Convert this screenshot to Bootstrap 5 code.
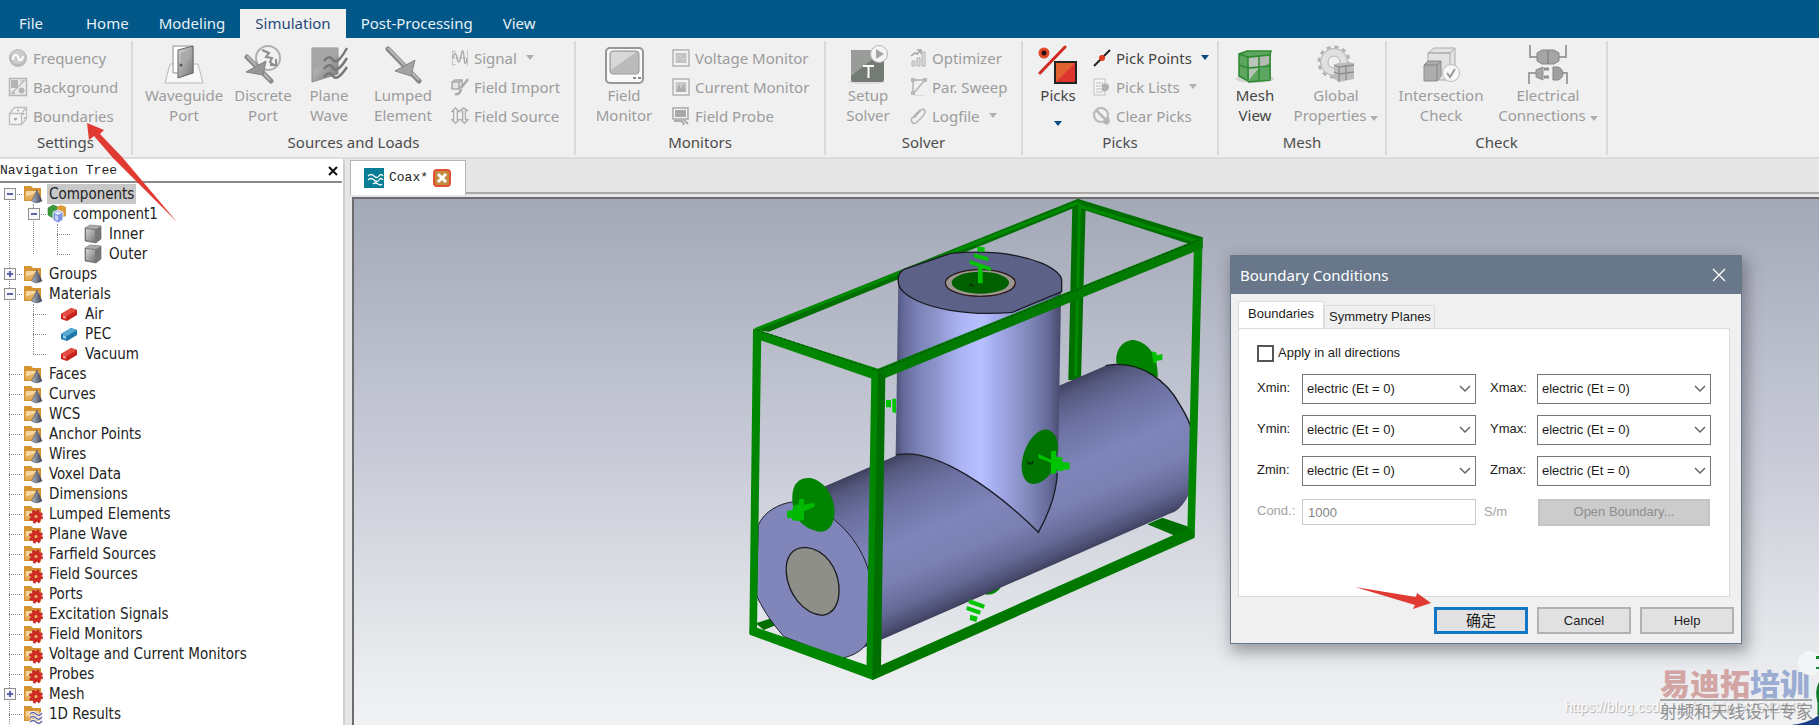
<!DOCTYPE html>
<html lang="en">
<head>
<meta charset="utf-8">
<meta name="viewport" content="width=device-width, initial-scale=1">
<title>Coax - Boundary Conditions</title>
<link href="https://cdn.jsdelivr.net/npm/bootstrap@5.3.0/dist/css/bootstrap.min.css" rel="stylesheet">
<style>
  :root { --ui: "Noto Sans", "Open Sans", sans-serif; --tree: "DejaVu Sans Condensed", sans-serif; --form: "Liberation Sans", "Noto Sans CJK SC", sans-serif; --fixed: "Liberation Mono", monospace; }
  body { font: 15px/20px var(--ui); color: #444; background: #e6e6e6; }
  svg { display: block; flex: none; }
  button { color: inherit; font: inherit; }

  /* menu tabs */
  .menu-bar { background: #005788; height: 38px; }
  .menu-bar .nav-link { color: #e8f1f7; padding: 4px 15px; height: 29px; line-height: 21px; border: 0; border-radius: 0; }
  .menu-bar .nav-link.active { background: #f0f0f0; color: #1f4a78; }
  .menu-bar .file-tab { width: 62px; margin-right: 9px; text-align: center; }

  /* ribbon */
  .ribbon { background: #f0f0f0; border-bottom: 2px solid #dcdcdc; height: 121px; padding-top: 3px; }
  .ribbon-group { border-right: 2px solid #d9dade; height: 114px; padding-top: 2px; }
  .ribbon-cols { height: 88px; padding-left: 4px; }
  .caption { color: #4c4c4c; line-height: 22px; }
  .tool, .big-tool { border: 0; background: none; padding: 0; color: #444; white-space: nowrap; }
  .tool { display: flex; align-items: center; gap: 5px; height: 29px; }
  .tool:disabled, .big-tool:disabled { color: #9c9c9c; }
  .big-tool { display: flex; flex-direction: column; align-items: center; padding-top: 2px; }
  .big-tool svg.glyph { margin-bottom: 1px; }
  .drop { display: inline-block; border: 4px solid transparent; border-top: 5px solid #b0b0b0; border-bottom: 0; margin-left: 4px; }
  .drop.on { border-top-color: #0a4a80; }
  .g-settings { width: 133px; } .g-sources { width: 443px; } .g-monitors { width: 250px; } .g-solver { width: 197px; }
  .g-picks { width: 196px; } .g-mesh { width: 168px; } .g-check { width: 221px; }
  .w62 { width: 62px; } .w64 { width: 64px; } .w68 { width: 68px; } .w76 { width: 76px; } .w80 { width: 80px; }
  .w88 { width: 88px; } .w94 { width: 94px; } .w98 { width: 98px; } .w100 { width: 100px; } .w114 { width: 114px; }

  /* navigation tree */
  .nav-pane { width: 345px; background: #fff; border-right: 2px solid #d0d0d0; }
  .pane-title { font: 13px/22px var(--fixed); color: #222; height: 24px; padding-top: 2px; border-bottom: 2px solid #8a8a8a; margin-right: 1px; }
  .tree, .tree ul { list-style: none; margin: 0; padding: 0; position: relative; }
  .tree { font: 15px/20px var(--tree); color: #222; padding-top: 1px; }
  .tree::before, .tree ul::before { content: ""; position: absolute; left: 9px; top: 0; bottom: 10px; border-left: 1px dotted #888; }
  .tree::before { top: 12px; bottom: -20px; }
  .tree ul { margin-left: 24px; }
  .node { display: flex; align-items: center; height: 20px; position: relative; }
  .node::before { content: ""; width: 13px; margin: 0 1px 0 9px; border-top: 1px dotted #888; }
  .node.leaf::before { margin-right: 13px; }
  .node svg { margin-right: 4px; }
  .node span { padding: 0 2px; }
  .node .picked { background: #c8c8c8; }
  .twist { position: absolute; left: 4px; top: 4px; width: 12px; height: 12px; padding: 0; border: 1px solid #8f8f8f; background: #f7f7f7; z-index: 1; }
  .twist::before, .twist.plus::after { content: ""; position: absolute; left: 2px; top: 4px; width: 6px; height: 2px; background: #5a63a8; }
  .twist.plus::after { left: 4px; top: 2px; width: 2px; height: 6px; }

  /* document area */
  .doc-area { margin-left: 5px; }
  .doc-tabs { height: 35px; border-bottom: 2px solid #a8a8a8; }
  .doc-tab { height: 35px; margin-top: 1px; padding: 0 16px 0 13px; gap: 5px; background: #fff; border: 1px solid #b5b5b5; border-bottom: 0; font: 13px/20px var(--fixed); color: #222; width: 116px; white-space: nowrap; }
  .doc-close { border: 0; padding: 0; background: none; }
  .view3d { margin-top: 3px; margin-left: 2px; border-top: 2px solid #6d6d70; border-left: 2px solid #6d6d70; background: linear-gradient(#a3a9b7 0%, #b5b8c6 22%, #c9ccd8 50%, #d9dce2 70%, #eaecef 90%, #f1f2f4 100%); }
  .scene { width: 500px; height: 500px; margin-left: 375px; }

  /* dialog */
  .dlg { position: absolute; top: 56px; right: 77px; width: 512px; background: #f0f0f0; border: 1px solid #68788a; box-shadow: 3px 6px 14px 2px rgba(50, 50, 60, .42); font: 13px/18px var(--form); color: #1c1c1c; padding-bottom: 9px; }
  .dlg-head { height: 38px; background: #68778a; color: #fff; font: 15px/38px var(--ui); padding: 0 15px 0 9px; }
  .dlg-head button { border: 0; background: none; padding: 0; }
  .dlg-tabs { margin: 8px 0 0 7px; height: 26px; }
  .dlg-tab { border: 1px solid #dcdcdc; border-bottom: 0; background: #f0f0f0; padding: 0 4px; height: 23px; width: 111px; white-space: nowrap; }
  .dlg-tab.active { background: #fff; height: 27px; width: 86px; padding-bottom: 3px; z-index: 1; position: relative; }
  .dlg-pane { background: #fff; border: 1px solid #dcdcdc; margin: 0 11px 0 7px; height: 269px; padding: 15px 18px; }
  .dlg-pane .form-check-input { width: 17px; height: 17px; margin: 0; border: 2px solid #555; border-radius: 0; }
  .bounds { display: grid; grid-template-columns: 45px 174px 61px 174px; row-gap: 11px; margin-top: 12px; align-items: center; }
  .bounds label { line-height: 28px; height: 30px; }
  .bounds label.second { padding-left: 14px; }
  .bounds .form-select { height: 30px; border: 1px solid #777; border-radius: 0; font: 13px/18px var(--form); color: #1c1c1c; padding: 5px 24px 5px 4px; background-image: url("data:image/svg+xml,%3Csvg xmlns='http://www.w3.org/2000/svg' viewBox='0 0 12 8'%3E%3Cpath d='M1 1l5 5 5-5' fill='none' stroke='%23666' stroke-width='1.500'/%3E%3C/svg%3E"); background-position: right 4px center; background-size: 12px 8px; }
  .bounds .form-control { height: 26px; border: 1px solid #ccc; border-radius: 0; font: 13px/18px var(--form); color: #858585; background: #fff; padding: 2px 5px; }
  .muted { color: #a3a3a3; }
  .open-btn, .dlg-btn { border: 2px solid #b2b2b4; background: #e1e1e1; height: 27px; width: 94px; padding: 0; }
  .open-btn { background: #ccc; border-color: #c4c4c4; color: #8e8e8e; width: 172px; margin-left: 1px; }
  .dlg-btn.primary { border: 3px solid #1177c4; font-size: 15px; }
  .dlg-foot { gap: 9px; margin: 10px 7px 0 0; }
  .arrow-ok { position: absolute; left: 124px; top: 330px; }
  .arrow-menu { position: absolute; left: 85px; top: 121px; z-index: 5; }

  /* watermark */
  .stamp { position: absolute; right: 7px; bottom: 4px; width: 152px; font: 17px/20px "Noto Sans CJK SC", sans-serif; color: #8f9091; white-space: nowrap; }
  .stamp strong { display: block; font: 900 30px/33px "Noto Sans CJK SC", sans-serif; border-bottom: 2px solid #a5a6a8; color: #d2a4a4; }
  .stamp strong b { color: #9bacd3; }
  .blog { position: absolute; right: 10px; bottom: 8px; width: 244px; font: 14px/20px "Liberation Sans", sans-serif; color: #fbfbfb; text-shadow: 1px 1px 1px #aaa; text-decoration: none; }
  .globe { position: absolute; right: 0; bottom: 0; }
</style>
</head>
<body class="vh-100 d-flex flex-column overflow-hidden position-relative">

<svg width="0" height="0" class="position-absolute" aria-hidden="true">
  <defs>
    <linearGradient id="gold" x2="0" y2="1"><stop stop-color="#f0c070"/><stop offset="1" stop-color="#d8922c"/></linearGradient>
    <linearGradient id="steel" x2="1" y2="1"><stop stop-color="#d5d5d5"/><stop offset="1" stop-color="#777"/></linearGradient>
    <linearGradient id="cone" x2="1" y2="0"><stop stop-color="#b5b9c8"/><stop offset="1" stop-color="#3c4155"/></linearGradient>
    <symbol id="folder" viewBox="0 0 20 20"><path d="M1 2h7l2 2h8v13H1z" fill="#d69332"/><path d="M3 7h13v9H2z" fill="#f6d6a0"/><path d="M2 12q7 0 13-6v10H2z" fill="url(#gold)" opacity=".7"/></symbol>
    <symbol id="f-cone" viewBox="0 0 20 20"><use href="#folder"/><path d="M14 6l5 11q-5.500 3.500-10.500 0z" fill="url(#cone)" stroke="#3c4052" stroke-width=".5"/></symbol>
    <symbol id="f-gear" viewBox="0 0 20 20"><use href="#folder"/><circle cx="13" cy="12.500" r="5.500" fill="none" stroke="#c32222" stroke-width="3" stroke-dasharray="2.400 1.920"/><circle cx="13" cy="12.500" r="3.500" fill="none" stroke="#cf2a26" stroke-width="4"/><circle cx="13" cy="12.500" r="1.300" fill="#e8b060"/></symbol>
    <symbol id="f-wave" viewBox="0 0 20 20"><use href="#folder"/><path d="M7 10q3-3 6 0t6-1M7 14q3-3 6 0t6-1M7 18q3-3 6 0t6-1" fill="none" stroke="#fff" stroke-width="3"/><path d="M7 10q3-3 6 0t6-1M7 14q3-3 6 0t6-1M7 18q3-3 6 0t6-1" fill="none" stroke="#5a62a0" stroke-width="1.300"/></symbol>
    <symbol id="comp" viewBox="0 0 20 20"><path d="M1 4l5-3 5 2v9l-5 2-5-3z" fill="#3b9a3e" stroke="#23702a" stroke-width=".6"/><path d="M10 3l4-2 5 2v9l-5 2-4-2z" fill="#dc9b3a"/><path d="M6 8l5-2 5 2v8l-5 3-5-3z" fill="#7f96e0" stroke="#fff" stroke-width=".8"/><path d="M7 9l4 2 4-2-4-2z" fill="#e3e9ff"/><path d="M8 11l3 1v5l-3-2z" fill="#c8d4ff"/></symbol>
    <symbol id="solid" viewBox="0 0 20 20"><path d="M2 4l5-3 11 1v13l-5 4-11-2z" fill="#777" stroke="#5f625f" stroke-width=".6"/><path d="M2 4l5-3 11 1-5 3z" fill="#a9aca9"/><path d="M3 5l9 1v12l-9-2z" fill="url(#steel)"/></symbol>
    <symbol id="brick-r" viewBox="0 0 20 20"><path d="M2 10l10-6 6 2v5l-10 6-6-2z" fill="#c8241e"/><path d="M2 10l10-6 6 2-10 6z" fill="#e34b40"/><path d="M4 11l3 1v3l-3-1z" fill="#f08a80"/></symbol>
    <symbol id="brick-b" viewBox="0 0 20 20"><path d="M2 10l10-6 6 2v5l-10 6-6-2z" fill="#1c78aa"/><path d="M2 10l10-6 6 2-10 6z" fill="#55a8d0"/><path d="M4 11l3 1v3l-3-1z" fill="#8fd0ee"/></symbol>
  </defs>
</svg>

<header>
  <nav class="menu-bar d-flex align-items-end" aria-label="Ribbon tabs">
    <a class="nav-link file-tab px-0" href="#">File</a>
    <a class="nav-link" href="#">Home</a>
    <a class="nav-link" href="#">Modeling</a>
    <a class="nav-link active" href="#">Simulation</a>
    <a class="nav-link" href="#">Post-Processing</a>
    <a class="nav-link" href="#">View</a>
  </nav>

  <div class="ribbon d-flex">
    <section class="ribbon-group g-settings">
      <div class="ribbon-cols ps-2">
        <button class="tool" disabled><svg width="20" height="20"><circle cx="10" cy="10" r="9" fill="#b9b9b9"/><circle cx="10" cy="9" r="7" fill="#cdcdcd"/><path d="M5 12q0-5 2.500-5t3 3 2.500 2 2-4" fill="none" stroke="#fff" stroke-width="2"/></svg>Frequency</button>
        <button class="tool" disabled><svg width="20" height="20"><rect x="1.500" y="1.500" width="17" height="17" fill="#ececec" stroke="#b4b4b4" stroke-width="1.500"/><rect x="3" y="3" width="7" height="8" fill="#b4b4b4"/><path d="M3 17L17 3" stroke="#bbb" stroke-width="1.500"/><circle cx="13.500" cy="13.500" r="3" fill="#b4b4b4"/><path d="M4 14l3 2-3 1M12 4h4" stroke="#b5b5b5" fill="none"/></svg>Background</button>
        <button class="tool" disabled><svg width="20" height="20"><path d="M1.500 7.500l5-6h12v11l-5 6h-12zM1.500 7.500h12v11M13.500 7.500l5-6" fill="#f4f4f4" stroke="#bdbdbd" stroke-width="1.300"/><g fill="#a5a5a5"><circle cx="7.500" cy="13" r="1.500"/><circle cx="10" cy="4.500" r="1"/><circle cx="15.500" cy="8" r="1"/><circle cx="16.500" cy="12" r="1"/></g></svg>Boundaries</button>
      </div>
      <div class="caption text-center">Settings</div>
    </section>

    <section class="ribbon-group g-sources">
      <div class="ribbon-cols d-flex">
        <button class="big-tool w94" disabled><svg class="glyph" width="40" height="39"><path d="M6 19h28l5 19H1z" fill="#f8f8f8" stroke="#b9b9b9"/><path d="M9 1h20v27H9z" fill="#e6e6e6" stroke="#999"/><path d="M10 2h18v25H10z" fill="#fff"/><path d="M14 5L29 1v27l-15 5z" fill="url(#steel)" stroke="#666"/><path d="M17 8l9-3v8l-9 4z" fill="#aaa"/><circle cx="17" cy="20" r="1.500" fill="#555"/></svg>Waveguide<br>Port</button>
        <button class="big-tool w64" disabled><svg class="glyph" width="40" height="39"><circle cx="25" cy="13" r="12" fill="#f1f1f1" stroke="#b0b0b0" stroke-width="2"/><path d="M19 5l7 3-3 4 6 1-2 4 5 4M27 20h6v-6" fill="none" stroke="#8c8c8c" stroke-width="2"/><path d="M4 12l24 24" stroke="#8a8a8a" stroke-width="5" stroke-linecap="round"/><path d="M4 11l23 24" stroke="#b5b5b5" stroke-width="2"/><path d="M3 27L23 16l-3 14z" fill="#979797" stroke="#808080" stroke-linejoin="round"/></svg>Discrete<br>Port</button>
        <button class="big-tool w68" disabled><svg class="glyph" width="40" height="39"><path d="M3 3h26v26L3 37z" fill="url(#steel)" stroke="#8a8a8a"/><path d="M3 3h26v8L3 27z" fill="#a5a5a5"/><path d="M15 16q5-7 9-1t14-12M15 24q5-7 9-1t14-10M15 32q5-7 9-1t14-9" fill="none" stroke="#777" stroke-width="2.500"/></svg>Plane<br>Wave</button>
        <button class="big-tool w80" disabled><svg class="glyph" width="40" height="39"><path d="M5 4l31 32" stroke="#868686" stroke-width="5" stroke-linecap="round"/><path d="M5 3l31 32" stroke="#b9b9b9" stroke-width="2"/><path d="M12 26L32 15l-4 16z" fill="#a3a3a3" stroke="#868686" stroke-linejoin="round"/></svg>Lumped<br>Element</button>
        <div class="ps-2">
          <button class="tool" disabled><svg width="18" height="18"><path d="M1.500 1v16M16.500 1v16M1 2.500h4M1 9h16M1 15.500h4" stroke="#c5c5c5" fill="none"/><path d="M2 9q2-9 4 0t4-2 3 1 3 2" stroke="#a5a5a5" stroke-width="1.300" fill="none"/></svg>Signal<i class="drop"></i></button>
          <button class="tool" disabled><svg width="18" height="18"><path d="M1 4l3-2h7v6l-3 3H1zM1 4h7v7M8 4l3-2" fill="#e4e4e4" stroke="#a9a9a9" stroke-width="1.500"/><path d="M17 1l-7 9M4 16q5 1 6-5" fill="none" stroke="#aaa" stroke-width="2.500"/></svg>Field Import</button>
          <button class="tool" disabled><svg width="18" height="18" viewBox="0 0 20 20"><path d="M1 5l4-4 4 4H7v9h2l-4 4-4-4h2V5zM10 4l4-3 4 3h-2v10h3l-4 4-4-4h2V4z" fill="#f4f4f4" stroke="#aeaeae" stroke-width="1.500"/></svg>Field Source</button>
        </div>
      </div>
      <div class="caption text-center">Sources and Loads</div>
    </section>

    <section class="ribbon-group g-monitors">
      <div class="ribbon-cols d-flex">
        <button class="big-tool w88" disabled><svg class="glyph" width="40" height="39"><rect x="2" y="3" width="37" height="35" rx="4" fill="#f8f8f8" stroke="#979797" stroke-width="2"/><rect x="6" y="6" width="29" height="23" rx="3" fill="#bbb" stroke="#999"/><path d="M7 9q0-2 2-2h23L7 25z" fill="#d8d8d8"/><path d="M29 33h3M34 33h3" stroke="#888" stroke-width="2"/></svg>Field<br>Monitor</button>
        <div class="ps-1">
          <button class="tool" disabled><svg width="18" height="18"><rect x="1" y="1" width="16" height="16" fill="#f3f3f3" stroke="#b3b3b3" stroke-width="1.500"/><rect x="3.500" y="4" width="11" height="10" fill="#c3c3c3"/><path d="M4 11q3-8 5-3t5 1" fill="none" stroke="#d9d9d9"/></svg>Voltage Monitor</button>
          <button class="tool" disabled><svg width="18" height="18"><rect x="1" y="1" width="16" height="16" fill="#f3f3f3" stroke="#b3b3b3" stroke-width="1.500"/><rect x="3.500" y="4" width="11" height="10" fill="#cacaca"/><path d="M4 14l3-8 2 5 3-6 2 9z" fill="#adadad"/></svg>Current Monitor</button>
          <button class="tool" disabled><svg width="18" height="18"><rect x="1" y="1" width="15" height="11" fill="#f3f3f3" stroke="#a8a8a8" stroke-width="1.500"/><rect x="3" y="3" width="11" height="7" fill="#a9a9a9"/><path d="M2 14h8l2 4M12 13l4 4" stroke="#aaa" stroke-width="2" fill="none"/></svg>Field Probe</button>
        </div>
      </div>
      <div class="caption text-center">Monitors</div>
    </section>

    <section class="ribbon-group g-solver">
      <div class="ribbon-cols d-flex">
        <button class="big-tool w76" disabled><svg class="glyph" width="40" height="39"><ellipse cx="18" cy="37" rx="18" ry="2" fill="#dadada"/><rect x="3" y="5" width="33" height="32" rx="2" fill="#747a74"/><path d="M3 5h33L3 31z" fill="#9a9c9a"/><path d="M15 21h11M20.500 21v12" stroke="#fff" stroke-width="2"/><circle cx="31" cy="9" r="8.500" fill="#f5f5f5" stroke="#b5b5b5"/><path d="M28 4l8 5-8 5z" fill="#a5a5a5"/></svg>Setup<br>Solver</button>
        <div class="ps-1">
          <button class="tool" disabled><svg width="17" height="18"><path d="M2 12h3v5H2zM7 9h3v8H7zM12 3h3v14h-3z" fill="#dcdcdc" stroke="#b3b3b3"/><path d="M1 7l4-3 2 1 4-4M7 1h4v4" fill="none" stroke="#a5a5a5" stroke-width="1.500"/></svg>Optimizer</button>
          <button class="tool" disabled><svg width="17" height="18"><path d="M3 16V2h12L3 16" fill="none" stroke="#adadad" stroke-width="1.300"/><path d="M1 0h4v4H1zM13 0h4v4h-4zM1 13h4v4H1z" fill="#b8b8b8"/><path d="M4 17.500h11" stroke="#ddd"/></svg>Par. Sweep</button>
          <button class="tool" disabled><svg width="17" height="18"><path d="M4 11l7-8q3-2 4 1t-8 11q-3 3-5 0t2-6l6-6" fill="none" stroke="#b3b3b3" stroke-width="1.500"/></svg>Logfile<i class="drop"></i></button>
        </div>
      </div>
      <div class="caption text-center">Solver</div>
    </section>

    <section class="ribbon-group g-picks">
      <div class="ribbon-cols d-flex">
        <button class="big-tool w62"><svg class="glyph" width="40" height="39"><circle cx="6" cy="8" r="4" fill="#301010" stroke="#e04a2c" stroke-width="3"/><path d="M2 28L27 2" stroke="#cf2a22" stroke-width="3" stroke-linecap="round"/><rect x="17" y="17" width="21" height="21" fill="#dd3630" stroke="#222" stroke-width="2"/><path d="M18 18h19L18 37z" fill="#e0602f"/></svg>Picks<i class="drop on mx-0 mt-3"></i></button>
        <div class="ps-1">
          <button class="tool"><svg width="18" height="18"><path d="M1 17L17 1" stroke="#222" stroke-width="2"/><circle cx="9" cy="9" r="3" fill="#e23a1c"/></svg>Pick Points<i class="drop on"></i></button>
          <button class="tool" disabled><svg width="18" height="18"><rect x="1" y="1" width="11" height="16" fill="#f7f7f7" stroke="#c0c0c0"/><path d="M3 5h7M3 8h7M3 11h7M3 14h7" stroke="#bbb"/><path d="M9 6q7-2 7 3t-7 4z" fill="#b0b0b0"/></svg>Pick Lists<i class="drop"></i></button>
          <button class="tool" disabled><svg width="18" height="18"><circle cx="8" cy="8" r="7" fill="#f1f1f1" stroke="#b8b8b8" stroke-width="2"/><path d="M3 3l11 11" stroke="#b8b8b8" stroke-width="2.500"/><path d="M12 12l4-2 1 5-3 3-4-2z" fill="#b5b5b5"/></svg>Clear Picks</button>
        </div>
      </div>
      <div class="caption text-center">Picks</div>
    </section>

    <section class="ribbon-group g-mesh">
      <div class="ribbon-cols d-flex">
        <button class="big-tool w64"><svg class="glyph" width="40" height="39"><ellipse cx="20" cy="34" rx="19" ry="4" fill="#d2d2d2"/><path d="M4 9l8-3h24v28l-19 3-13-6z" fill="#5ea562"/><path d="M13 13l11-1v10l-11 2z" fill="#bcc3bc"/><path d="M24 11l11-1v8l-11 6z" fill="#b4bab4"/><path d="M14 24l10-1-10 12z" fill="#b5c4b5"/><path d="M4 9l9 3v24l-9-5zM4 9l8-3h24l-1 4-22 2M24 11v24M13 23l22-2M4 20l9 3M35 10v25l-22 2" fill="none" stroke="#2c8a30" stroke-width="1.500"/></svg>Mesh<br>View</button>
        <button class="big-tool w98" disabled><svg class="glyph" width="40" height="39"><circle cx="18" cy="17" r="15" fill="none" stroke="#b0b0b0" stroke-width="3" stroke-dasharray="4 3.850"/><circle cx="18" cy="17" r="10" fill="none" stroke="#e0e0e0" stroke-width="8"/><circle cx="18" cy="17" r="13.500" fill="none" stroke="#b0b0b0"/><circle cx="18" cy="17" r="6" fill="#f0f0f0" stroke="#b0b0b0"/><path d="M18 20l4-2h16v16l-15 3-5-3z" fill="#bdbdbd"/><path d="M18 20l5 2v15M23 22l15-2M30 20v15M18 27l5 2 15-2" fill="none" stroke="#8d8d8d" stroke-width="1.300"/></svg>Global<span>Properties<i class="drop"></i></span></button>
      </div>
      <div class="caption text-center">Mesh</div>
    </section>

    <section class="ribbon-group g-check">
      <div class="ribbon-cols d-flex">
        <button class="big-tool w100" disabled><svg class="glyph" width="40" height="39"><path d="M7 8l6-5h21l-5 5zM7 8h22v27H7zM29 8l5-5v25l-5 7" fill="#e3e3e3" stroke="#ababab"/><path d="M3 20l4-4h13v15l-4 5H3z" fill="#adadad" stroke="#8c8c8c"/><path d="M3 20h13v16M16 20l4-4" fill="none" stroke="#858585"/><circle cx="30" cy="28" r="8.500" fill="#f8f8f8" stroke="#bbb"/><path d="M26 28l3 4 5-8" fill="none" stroke="#999" stroke-width="2"/></svg>Intersection<br>Check</button>
        <button class="big-tool w114" disabled><svg class="glyph" width="40" height="39"><path d="M2 0v12h7M38 0v12h-7M1 39V28h7M39 39V28h-7" fill="none" stroke="#a0a0a0" stroke-width="2"/><path d="M9 8l5-3h12l5 3v8l-5 3H14l-5-3z" fill="#a5a5a5" stroke="#858585"/><path d="M20 5v14" stroke="#777"/><path d="M8 25l7-3v13l-7-3z" fill="#a5a5a5" stroke="#8d8d8d"/><path d="M16 24h5M16 32h5" stroke="#909090" stroke-width="3"/><path d="M25 22h5q5 2 5 6.500t-5 6.500h-5z" fill="#a0a0a0" stroke="#858585"/></svg>Electrical<span>Connections<i class="drop"></i></span></button>
      </div>
      <div class="caption text-center">Check</div>
    </section>
  </div>
</header>

<main class="d-flex flex-grow-1 overflow-hidden">
  <aside class="nav-pane flex-shrink-0 overflow-hidden">
    <div class="pane-title d-flex justify-content-between align-items-center">
      <span>Navigation Tree</span>
      <button class="border-0 bg-transparent p-0 me-1" aria-label="Close tree"><svg width="10" height="10"><path d="M1 1l8 8M9 1L1 9" stroke="#111" stroke-width="2"/></svg></button>
    </div>
    <ul class="tree">
      <li><div class="node"><button class="twist" aria-label="Collapse"></button><svg width="20" height="20"><use href="#f-cone"/></svg><span class="picked">Components</span></div>
        <ul>
          <li><div class="node"><button class="twist" aria-label="Collapse"></button><svg width="20" height="20"><use href="#comp"/></svg><span>component1</span></div>
            <ul>
              <li class="node leaf"><svg width="20" height="20"><use href="#solid"/></svg><span>Inner</span></li>
              <li class="node leaf"><svg width="20" height="20"><use href="#solid"/></svg><span>Outer</span></li>
            </ul>
          </li>
        </ul>
      </li>
      <li class="node"><button class="twist plus" aria-label="Expand"></button><svg width="20" height="20"><use href="#f-cone"/></svg><span>Groups</span></li>
      <li><div class="node"><button class="twist" aria-label="Collapse"></button><svg width="20" height="20"><use href="#f-cone"/></svg><span>Materials</span></div>
        <ul>
          <li class="node leaf"><svg width="20" height="20"><use href="#brick-r"/></svg><span>Air</span></li>
          <li class="node leaf"><svg width="20" height="20"><use href="#brick-b"/></svg><span>PEC</span></li>
          <li class="node leaf"><svg width="20" height="20"><use href="#brick-r"/></svg><span>Vacuum</span></li>
        </ul>
      </li>
      <li class="node"><svg width="20" height="20"><use href="#f-cone"/></svg><span>Faces</span></li>
      <li class="node"><svg width="20" height="20"><use href="#f-cone"/></svg><span>Curves</span></li>
      <li class="node"><svg width="20" height="20"><use href="#f-cone"/></svg><span>WCS</span></li>
      <li class="node"><svg width="20" height="20"><use href="#f-cone"/></svg><span>Anchor Points</span></li>
      <li class="node"><svg width="20" height="20"><use href="#f-cone"/></svg><span>Wires</span></li>
      <li class="node"><svg width="20" height="20"><use href="#f-cone"/></svg><span>Voxel Data</span></li>
      <li class="node"><svg width="20" height="20"><use href="#f-cone"/></svg><span>Dimensions</span></li>
      <li class="node"><svg width="20" height="20"><use href="#f-gear"/></svg><span>Lumped Elements</span></li>
      <li class="node"><svg width="20" height="20"><use href="#f-gear"/></svg><span>Plane Wave</span></li>
      <li class="node"><svg width="20" height="20"><use href="#f-gear"/></svg><span>Farfield Sources</span></li>
      <li class="node"><svg width="20" height="20"><use href="#f-gear"/></svg><span>Field Sources</span></li>
      <li class="node"><svg width="20" height="20"><use href="#f-gear"/></svg><span>Ports</span></li>
      <li class="node"><svg width="20" height="20"><use href="#f-gear"/></svg><span>Excitation Signals</span></li>
      <li class="node"><svg width="20" height="20"><use href="#f-gear"/></svg><span>Field Monitors</span></li>
      <li class="node"><svg width="20" height="20"><use href="#f-gear"/></svg><span>Voltage and Current Monitors</span></li>
      <li class="node"><svg width="20" height="20"><use href="#f-gear"/></svg><span>Probes</span></li>
      <li class="node"><button class="twist plus" aria-label="Expand"></button><svg width="20" height="20"><use href="#f-gear"/></svg><span>Mesh</span></li>
      <li class="node"><svg width="20" height="20"><use href="#f-wave"/></svg><span>1D Results</span></li>
    </ul>
  </aside>

  <div class="doc-area flex-grow-1 d-flex flex-column">
    <div class="doc-tabs">
      <div class="doc-tab d-flex align-items-center">
        <svg width="20" height="20"><rect width="20" height="20" fill="#087d95"/><path d="M4 8q3-3 6 0t5 0 4 0M4 12q3-3 6 0t5 0 4 0M9 16q2-2 5 0t4 0" fill="none" stroke="#fff" stroke-width="1.300"/></svg>
        <span>Coax*</span>
        <button class="doc-close" aria-label="Close Coax"><svg width="18" height="18"><rect x="1" y="1" width="16" height="16" rx="3" fill="#c38a42" stroke="#e2512f" stroke-width="2"/><path d="M5 5l8 8M13 5l-8 8" stroke="#fff" stroke-width="3"/></svg></button>
      </div>
    </div>

    <div class="view3d flex-grow-1 position-relative overflow-hidden">
      <svg class="scene" viewBox="0 27 1500 1500" role="img" aria-label="Coaxial tee model inside its bounding box">
        <defs>
          <linearGradient id="pipe" gradientUnits="userSpaceOnUse" x1="700" y1="711" x2="894" y2="1159"><stop stop-color="#3f415e"/><stop offset=".08" stop-color="#565a80"/><stop offset=".25" stop-color="#6c71a2"/><stop offset=".5" stop-color="#7f85ba"/><stop offset=".7" stop-color="#7a80b2"/><stop offset=".86" stop-color="#656a97"/><stop offset=".96" stop-color="#4d5074"/><stop offset="1" stop-color="#3e405c"/></linearGradient>
          <linearGradient id="riser" gradientUnits="userSpaceOnUse" x1="500" y1="0" x2="997" y2="0"><stop stop-color="#4d5175"/><stop offset=".05" stop-color="#666b9c"/><stop offset=".14" stop-color="#7d83b8"/><stop offset=".24" stop-color="#8b94c8"/><stop offset=".3" stop-color="#99a0dc"/><stop offset=".4" stop-color="#adb5f6"/><stop offset=".52" stop-color="#b7c0ff"/><stop offset=".6" stop-color="#a5adee"/><stop offset=".7" stop-color="#959cd6"/><stop offset=".8" stop-color="#8188bb"/><stop offset=".92" stop-color="#666b9a"/><stop offset="1" stop-color="#45486a"/></linearGradient>
        </defs>
        <!-- rear edges of the bounding box -->
        <g fill="#006e00">
          <path d="M72 418L1048 26l22 14L120 425z"/>
          <path d="M1045 26l376 116-10 30L1040 52z"/>
          <path d="M1030 46l40 4-14 520h-38z"/>
          <path d="M1255 1003l45-20 92 32v30l-50-6z"/>
          <path d="M80 1300l50-16 14 20-40 16z"/>
        </g>
        <path d="M80 418L1048 38M1052 48l350 105M1052 40l-12 520" fill="none" stroke="#008a00" stroke-width="9"/>
        <path d="M1162 520C1158 480 1180 450 1215 450 1260 458 1288 500 1286 562L1230 545z" fill="#008200"/>
        <path d="M1268 484l15 4v8l17-4v18l-17 2v6l-10 2z" fill="#00c000"/>
        <path d="M770 1214q30 2 46-22l-40 10z" fill="#008200"/>
        <!-- horizontal pipe -->
        <path d="M195 935L290 888 1130 527C1240 510 1320 585 1350 640 1375 680 1385 700 1387 720L1385 900C1370 940 1345 965 1325 970L455 1350 335 1405z" fill="url(#pipe)"/>
        <path d="M1130 527C1240 505 1320 585 1350 640 1375 680 1385 700 1387 720" fill="none" stroke="#171a20" stroke-width="4"/>
        <path d="M88 1005C105 965 150 940 195 935 C300 950 385 1040 415 1130L432 1190 430 1310C425 1365 390 1395 335 1405L165 1340C120 1290 95 1245 82 1215z" fill="#8085ba" stroke="#1c1e28" stroke-width="3"/>
        <path d="M172 1150C168 1100 190 1072 230 1072 290 1078 325 1135 330 1190 332 1240 315 1270 280 1276 220 1270 178 1210 172 1150z" fill="#8e8f89" stroke="#1c1e20" stroke-width="4"/>
        <!-- vertical branch -->
        <path d="M508 275L500 795C620 770 800 900 928 1027 960 970 985 900 987 830L997 270z" fill="url(#riser)"/>
        <path d="M500 795C620 770 800 900 928 1027 960 970 982 910 985 850" fill="none" stroke="#1a1c24" stroke-width="4"/>
        <path d="M508 275Q505 250 525 238L665 190C760 182 850 185 940 220Q995 245 998 270V305L850 367C700 380 600 350 560 330 525 312 508 295 508 275z" fill="#5c6188" stroke="#1a1c24" stroke-width="4"/>
        <ellipse cx="754" cy="279" rx="105" ry="40" fill="#9d958f" stroke="#2a1a1a" stroke-width="4"/>
        <ellipse cx="754" cy="278" rx="86" ry="33" fill="#006000"/>
        <path d="M720 290l6-8 10 8" fill="none" stroke="#111" stroke-width="3"/>
        <!-- boundary markers -->
        <g fill="#00c400">
          <path d="M747 230h14v50h-14zM722 210l64 22v12l-64-22zM735 190l43 12v12l-43-12zM745 170l22 2v14l-22-2z"/>
          <path d="M471 630h15v22h-15zM490 626h11v44l-11-4z"/>
          <path d="M722 1228l46 16-4 12-46-16zM714 1248l42 14-4 12-40-14zM724 1274l22 6-4 16-20-6z"/>
        </g>
        <path d="M878 825C882 770 915 722 950 718 975 722 988 745 987 780L970 840C955 870 930 882 910 882 885 878 877 850 878 825z" fill="#007400"/>
        <path d="M895 812l4 12 5-8 4 8 4-12" fill="none" stroke="#052505" stroke-width="3"/>
        <path d="M928 792l38 17V784l15-2v18l19 2v14l22 2v20l-16 2v-4l-6 8-15-2v-12l-4 20-15 2v-34l-38-14z" fill="#00c400"/>
        <path d="M190 930C188 880 210 862 245 864 290 875 315 920 317 965 315 1005 300 1026 270 1025 215 1015 192 975 190 930z" fill="#008400"/>
        <path d="M210 928l15-2v18l32-6v12l-32 14v25l-17 4-18-2v-6l-16-2v-20l16-2 3-14 17-4z" fill="#00b900"/>
        <!-- front edges of the bounding box -->
        <g fill="#008600">
          <path d="M72 418h25l-13 900-23 14z"/>
          <path d="M80 418l367 118v36L80 446z"/>
          <path d="M1395 160l26-18-24 900-22-16z"/>
          <path d="M62 1316l24-2 346 118v38L62 1334z"/>
        </g>
        <path d="M447 536L1421 142v33L447 573z" fill="#007a00"/>
        <path d="M432 1436L1376 1016l20 8v20L432 1470z" fill="#007800"/>
        <path d="M427 556l22-6-5 900-12 20-20-12z" fill="#008600"/>
        <path d="M447 545l22 10-13 880-26 34z" fill="#006e00"/>
        <path d="M85 420l362 122L1410 150" fill="none" stroke="#004a00" stroke-width="3" stroke-dasharray="8 6"/>
      </svg>

      <a class="blog" href="#">https://blog.csdn.net/weixin_41542947</a>
      <div class="stamp"><strong>易迪拓<b>培训</b></strong>射频和天线设计专家</div>
      <svg class="globe" width="30" height="80"><circle cx="21" cy="18" r="12" fill="#f4f5f6"/><path d="M27 11h3v3h-3zM27 22h3v2h-3z" fill="#138a26"/><path d="M30 38q-4 8-1 20v12h1z" fill="#0d7a22" stroke="#0d7a22"/><path d="M2 80q18-2 28-10v10z" fill="#1b3f86"/></svg>

      <div class="dlg" role="dialog" aria-label="Boundary Conditions">
        <div class="dlg-head d-flex justify-content-between align-items-center">
          <span>Boundary Conditions</span>
          <button aria-label="Close"><svg width="14" height="14"><path d="M1 1l12 12M13 1L1 13" stroke="#fff" stroke-width="1.300"/></svg></button>
        </div>
        <div class="dlg-tabs d-flex align-items-end">
          <button class="dlg-tab active">Boundaries</button>
          <button class="dlg-tab">Symmetry Planes</button>
        </div>
        <div class="dlg-pane">
          <div class="d-flex align-items-center gap-1">
            <input class="form-check-input" type="checkbox" id="allDir"><label for="allDir">Apply in all directions</label>
          </div>
          <div class="bounds">
            <label for="xmin">Xmin:</label><select class="form-select" id="xmin"><option>electric (Et = 0)</option></select>
            <label for="xmax" class="second">Xmax:</label><select class="form-select" id="xmax"><option>electric (Et = 0)</option></select>
            <label for="ymin">Ymin:</label><select class="form-select" id="ymin"><option>electric (Et = 0)</option></select>
            <label for="ymax" class="second">Ymax:</label><select class="form-select" id="ymax"><option>electric (Et = 0)</option></select>
            <label for="zmin">Zmin:</label><select class="form-select" id="zmin"><option>electric (Et = 0)</option></select>
            <label for="zmax" class="second">Zmax:</label><select class="form-select" id="zmax"><option>electric (Et = 0)</option></select>
            <label for="cond" class="muted">Cond.:</label><input class="form-control" id="cond" value="1000" disabled>
            <span class="muted ps-2">S/m</span><button class="open-btn" disabled>Open Boundary...</button>
          </div>
        </div>
        <div class="dlg-foot d-flex justify-content-end">
          <button class="dlg-btn primary">确定</button>
          <button class="dlg-btn">Cancel</button>
          <button class="dlg-btn">Help</button>
        </div>
        <svg class="arrow-ok" width="80" height="26"><path d="M0 1l61 10 1-4 14 10-18 6 2-4z" fill="#e03a32"/></svg>
      </div>
    </div>
  </div>
</main>

<svg class="arrow-menu" width="94" height="104"><path d="M2 2l17 7-4 4 22 23 55 65L28 37 9 15l-5 4z" fill="#e03a32"/></svg>

<script src="https://cdn.jsdelivr.net/npm/bootstrap@5.3.0/dist/js/bootstrap.bundle.min.js"></script>
</body>
</html>
